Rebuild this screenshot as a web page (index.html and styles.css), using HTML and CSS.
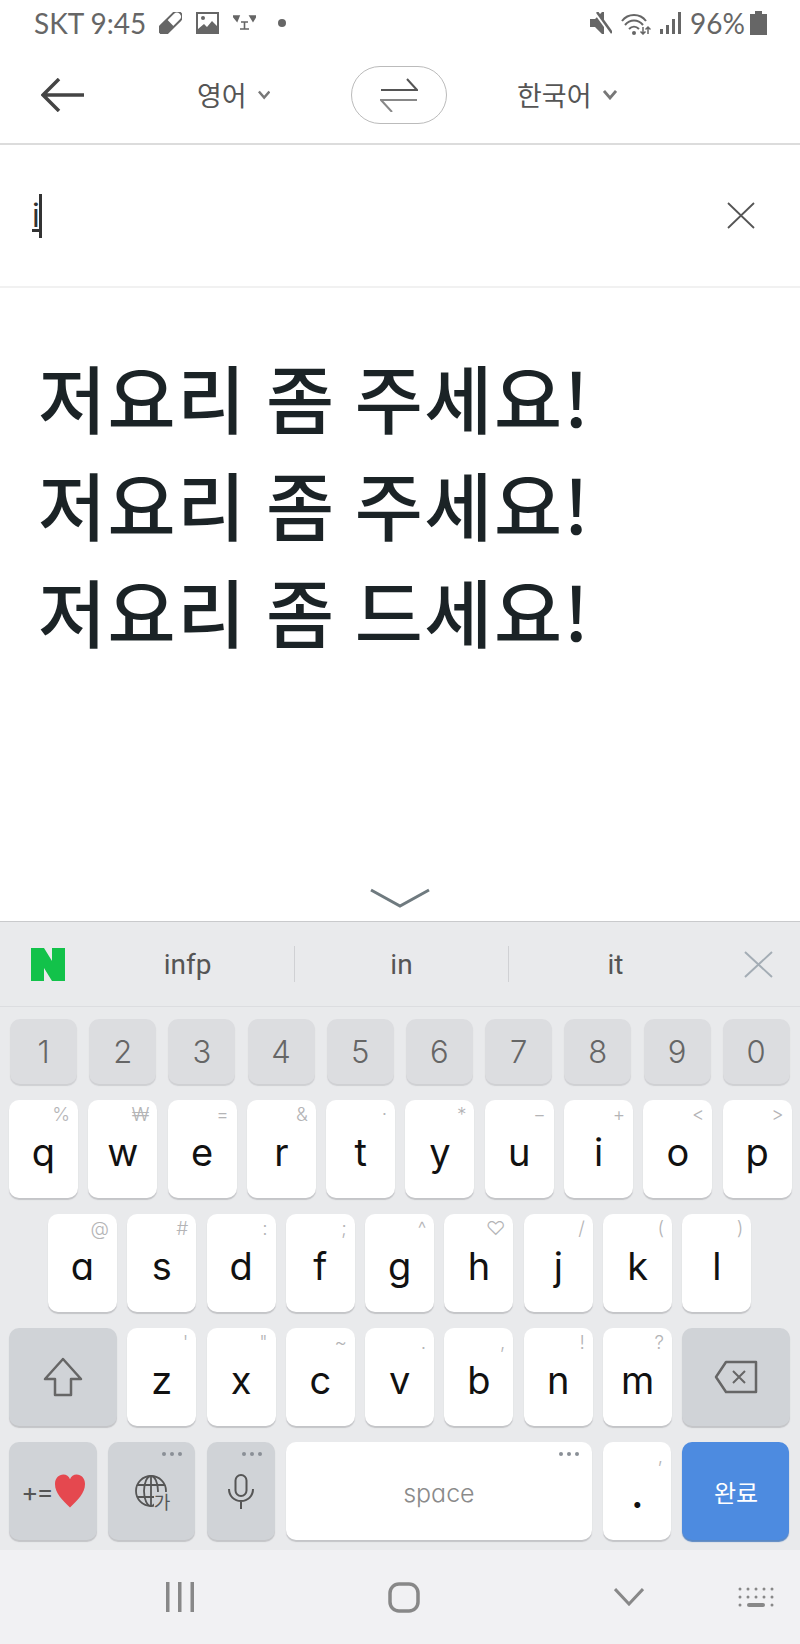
FILE: index.html
```html
<!DOCTYPE html>
<html lang="ko">
<head>
    <meta charset="UTF-8">
    <meta name="viewport" content="width=device-width, initial-scale=1.0">
    <title>번역</title>
    <link rel="stylesheet" href="styles.css">
</head>
<body>
    <div class="status">
        <div class="status-left">
            <span class="status-text">SKT 9:45</span>
            <svg class="ic-pill" width="23" height="22" viewBox="0 0 23 22"><g transform="rotate(45 11.5 11)"><rect x="6.500" y="-3" width="10" height="28" rx="5" fill="#fff" stroke="#666" stroke-width="2"/><path d="M6 11h11v9a5.500 5.500 0 0 1-11 0z" fill="#666"/></g></svg>
            <svg class="ic-image" width="23" height="22" viewBox="0 0 23 22"><path d="M0 0h23v22H0z" fill="#666"/><path d="M2 2h19v12l-5-5-5 6-3-3-6 5z" fill="#fff"/><circle cx="7" cy="6" r="2" fill="#666"/></svg>
            <svg class="ic-face" width="23" height="16" viewBox="0 0 23 16"><path d="M0 1h6l-2 5zM17 1h6l-3 5zM8 7h7M11.500 7v7M7 14h9" fill="#666" stroke="#666" stroke-width="1.600"/></svg>
            <span class="status-dot"></span>
        </div>
        <div class="status-right">
            <svg width="22" height="23" viewBox="0 0 22 23"><path d="M0 7h5l7-7h2v22h-2l-7-7H0z" fill="#666"/><path d="M5 0l16 22" stroke="#fff" stroke-width="3"/><path d="M7 0l15 21" stroke="#666" stroke-width="2.500"/></svg>
            <svg width="30" height="23" viewBox="0 0 30 23" fill="none" stroke="#666" stroke-width="2"><path d="M1 9C7 1 19 1 25 9M4 13c5-6 13-6 18 0M8 17c3-3 7-3 10 0"/><circle cx="13" cy="21" r="2" fill="#666" stroke="none"/><path d="M22 15v7M19.500 19.500L22 22l2.500-2.500M27 22v-7M24.500 17.500L27 15l2.500 2.500" stroke-width="1.500"/></svg>
            <svg width="21" height="22" viewBox="0 0 21 22" fill="#666"><path d="M0 17h3v5H0zM6 13h3v9H6zM12 7h3v15h-3zM18 0h3v22h-3z"/></svg>
            <span class="status-text status-batt">96%</span>
            <svg width="17" height="24" viewBox="0 0 17 24" fill="#666"><path d="M5 0h7v3h5v21H0V3h5z"/></svg>
        </div>
    </div>

    <div class="topbar">
        <svg class="back" width="43" height="34" viewBox="0 0 43 34" fill="none" stroke="#444" stroke-width="3.500"><path d="M18 1L2 17l16 16M2 17h41"/></svg>
        <div class="lang lang-src">영어 <svg width="14" height="10" viewBox="0 0 14 10" fill="none" stroke="#777" stroke-width="2.800"><path d="M1 1l6 7 6-7"/></svg></div>
        <div class="swap">
            <svg width="38" height="34" viewBox="0 0 38 34" fill="none" stroke-width="2"><path d="M1 12h36L27 1" stroke="#555"/><path d="M37 22H1l11 12" stroke="#888"/></svg>
        </div>
        <div class="lang lang-dst">한국어 <svg width="14" height="10" viewBox="0 0 14 10" fill="none" stroke="#777" stroke-width="2.800"><path d="M1 1l6 7 6-7"/></svg></div>
    </div>

    <div class="input-row">
        <span class="typed">i</span><span class="caret"></span>
        <svg class="clear" width="28" height="27" viewBox="0 0 28 27" fill="none" stroke="#555" stroke-width="1.800"><path d="M1 1l26 25M27 1L1 26"/></svg>
    </div>

    <div class="result">
        <p>저요리 좀 주세요!</p>
        <p>저요리 좀 주세요!</p>
        <p>저요리 좀 드세요!</p>
    </div>

    <div class="collapse">
        <svg width="60" height="20" viewBox="0 0 60 20" fill="none" stroke="#6f7a7f" stroke-width="3"><path d="M1 2l29 16L59 2"/></svg>
    </div>

    <div class="keyboard">
        <div class="suggest">
            <svg class="naver" width="34" height="33" viewBox="0 0 34 33"><path d="M0 0h13l8 13V0h13v33H21l-8-13v13H0z" fill="#12c24a"/></svg>
            <span class="word word-1">infp</span>
            <span class="sep"></span>
            <span class="word">in</span>
            <span class="sep"></span>
            <span class="word">it</span>
            <svg class="sug-close" width="29" height="27" viewBox="0 0 29 27" fill="none" stroke="#a4adb5" stroke-width="2"><path d="M1 1l27 25M28 1L1 26"/></svg>
        </div>
        <div class="keys">
            <div class="row row-num">
                <span class="key num">1</span><span class="key num">2</span><span class="key num">3</span><span class="key num">4</span><span class="key num">5</span>
                <span class="key num">6</span><span class="key num">7</span><span class="key num">8</span><span class="key num">9</span><span class="key num">0</span>
            </div>
            <div class="row">
                <span class="key">q<i class="hint">%</i></span><span class="key">w<i class="hint">₩</i></span><span class="key">e<i class="hint">=</i></span><span class="key">r<i class="hint">&amp;</i></span><span class="key">t<i class="hint">·</i></span>
                <span class="key">y<i class="hint">*</i></span><span class="key">u<i class="hint">−</i></span><span class="key">i<i class="hint">+</i></span><span class="key">o<i class="hint">&lt;</i></span><span class="key">p<i class="hint">&gt;</i></span>
            </div>
            <div class="row row-a">
                <span class="key">a<i class="hint">@</i></span><span class="key">s<i class="hint">#</i></span><span class="key">d<i class="hint">:</i></span><span class="key">f<i class="hint">;</i></span><span class="key">g<i class="hint">^</i></span>
                <span class="key">h<i class="hint">♡</i></span><span class="key">j<i class="hint">/</i></span><span class="key">k<i class="hint">(</i></span><span class="key">l<i class="hint">)</i></span>
            </div>
            <div class="row">
                <span class="key fn wide">
                    <svg width="40" height="40" viewBox="0 0 40 40" fill="none" stroke="#666" stroke-width="2.500"><path d="M20 2L2 22h10v16h16V22h10z" stroke-linejoin="round"/></svg>
                </span>
                <span class="key">z<i class="hint">'</i></span><span class="key">x<i class="hint">"</i></span><span class="key">c<i class="hint">~</i></span><span class="key">v<i class="hint">.</i></span><span class="key">b<i class="hint">,</i></span>
                <span class="key">n<i class="hint">!</i></span><span class="key">m<i class="hint">?</i></span>
                <span class="key fn wide">
                    <svg width="44" height="34" viewBox="0 0 44 34" fill="none" stroke="#666" stroke-width="2.500"><path d="M12 2h30v30H12L2 17z" stroke-linejoin="round"/><path d="M19 11l12 12M31 11L19 23" stroke-width="2"/></svg>
                </span>
            </div>
            <div class="row row-bottom">
                <span class="key fn k-sym"><span class="sym-text">+=</span>
                    <svg width="30" height="34" viewBox="0 0 32 35"><path d="M16 35C8 27 0 20 0 10 0 4 4 0 9 0c3 0 6 2 7 5 1-3 4-5 7-5 5 0 9 4 9 10 0 10-8 17-16 25z" fill="#e5484f"/></svg>
                </span>
                <span class="key fn k-globe">
                    <svg class="dots" width="20" height="4" viewBox="0 0 20 4" fill="#8a8f96"><circle cx="2" cy="2" r="2"/><circle cx="10" cy="2" r="2"/><circle cx="18" cy="2" r="2"/></svg>
                    <svg width="33" height="35" viewBox="0 0 33 35" fill="none" stroke="#555" stroke-width="1.800"><circle cx="16" cy="17" r="15"/><ellipse cx="16" cy="17" rx="7" ry="15"/><path d="M16 2v30M2 11h28M2 23h17"/></svg>
                    <span class="ga">가</span>
                </span>
                <span class="key fn k-mic">
                    <svg class="dots" width="20" height="4" viewBox="0 0 20 4" fill="#8a8f96"><circle cx="2" cy="2" r="2"/><circle cx="10" cy="2" r="2"/><circle cx="18" cy="2" r="2"/></svg>
                    <svg width="26" height="35" viewBox="0 0 26 35" fill="none" stroke="#555" stroke-width="2"><rect x="7.500" y="1" width="11" height="21" rx="5.500"/><path d="M1 15c0 7 5 12 12 12s12-5 12-12M13 27v8"/></svg>
                </span>
                <span class="key k-space">space
                    <svg class="dots" width="20" height="4" viewBox="0 0 20 4" fill="#8a8f96"><circle cx="2" cy="2" r="2"/><circle cx="10" cy="2" r="2"/><circle cx="18" cy="2" r="2"/></svg>
                </span>
                <span class="key k-dot">.<i class="hint">,</i></span>
                <span class="key k-done">완료</span>
            </div>
        </div>
    </div>

    <div class="navbar">
        <svg class="nav-recent" width="28" height="30" viewBox="0 0 28 30" fill="#888"><path d="M0 0h3.500v30H0zM12 0h3.500v30H12zM24.500 0H28v30h-3.500z"/></svg>
        <svg class="nav-home" width="32" height="31" viewBox="0 0 32 31" fill="none" stroke="#888" stroke-width="3.500"><rect x="2" y="2" width="28" height="27" rx="9"/></svg>
        <svg class="nav-back" width="30" height="18" viewBox="0 0 30 18" fill="none" stroke="#888" stroke-width="3"><path d="M1 1l14 15L29 1"/></svg>
        <svg class="nav-kbd" width="36" height="21" viewBox="0 0 36 21" fill="#888"><circle cx="2" cy="2" r="1.500"/><circle cx="10" cy="2" r="1.500"/><circle cx="18" cy="2" r="1.500"/><circle cx="26" cy="2" r="1.500"/><circle cx="34" cy="2" r="1.500"/><circle cx="2" cy="10" r="1.500"/><circle cx="10" cy="10" r="1.500"/><circle cx="18" cy="10" r="1.500"/><circle cx="26" cy="10" r="1.500"/><circle cx="34" cy="10" r="1.500"/><circle cx="2" cy="18" r="1.500"/><rect x="9" y="16" width="18" height="4" rx="2"/><circle cx="34" cy="18" r="1.500"/></svg>
    </div>
</body>
</html>
```
FILE: styles.css
```css
* {
    box-sizing: border-box;
}
body {
    margin: 0;
    width: 800px;
    height: 1644px;
    display: flex;
    flex-direction: column;
    background-color: #fff;
    font-family: "Noto Sans CJK KR", "Noto Sans", sans-serif;
    overflow: hidden;
}

/* status bar */
.status {
    height: 46px;
    padding: 0 33px 0 34px;
    display: flex;
    justify-content: space-between;
    align-items: center;
}
.status-left, .status-right {
    display: flex;
    align-items: center;
}
.status-text {
    font-family: Lato, sans-serif;
    font-size: 28px;
    color: #666;
}
.ic-pill {
    margin-left: 13px;
}
.ic-image {
    margin-left: 14px;
}
.ic-face {
    margin-left: 14px;
}
.status-dot {
    width: 8px;
    height: 8px;
    margin-left: 22px;
    border-radius: 50%;
    background-color: #666;
}
.status-right {
    gap: 9px;
}
.status-batt {
    margin-right: -4px;
}

/* top bar */
.topbar {
    height: 99px;
    padding-left: 41px;
    display: flex;
    align-items: center;
    border-bottom: 2px solid #dcdcdc;
}
.lang {
    display: flex;
    align-items: center;
    gap: 11px;
    font-size: 27px;
    color: #555;
    white-space: nowrap;
}
.lang-src {
    width: 73px;
    margin-left: 113px;
}
.lang-dst {
    width: 100px;
    margin-left: 70px;
}
.swap {
    width: 96px;
    height: 58px;
    margin-left: 81px;
    display: flex;
    align-items: center;
    justify-content: center;
    border: 1px solid #bbb;
    border-radius: 29px;
}

/* input */
.input-row {
    height: 143px;
    padding: 0 45px 0 32px;
    display: flex;
    align-items: center;
    border-bottom: 2px solid #f1f1f1;
}
.typed {
    font-family: Inter, sans-serif;
    font-size: 32px;
    line-height: 44px;
    color: #333;
    text-decoration: underline;
}
.caret {
    width: 3px;
    height: 44px;
    margin-left: -1px;
    background-color: #333;
}
.clear {
    margin-left: auto;
}

/* result */
.result {
    flex: 1;
    padding: 54px 0 0 38px;
}
.result p {
    margin: 0;
    height: 107px;
    font-size: 74px;
    font-weight: 500;
    line-height: 107px;
    letter-spacing: 1.5px;
    word-spacing: -3px;
    color: #1b2326;
    white-space: nowrap;
}
.collapse {
    height: 46px;
    display: flex;
    justify-content: center;
    padding-bottom: 13px;
    align-items: flex-end;
}

/* keyboard */
.keyboard {
    background-color: #e9eaec;
    border-top: 1px solid #c9cacc;
}
.suggest {
    height: 85px;
    display: flex;
    align-items: center;
    border-bottom: 1px solid #dcdde0;
    padding-left: 31px;
}
.word {
    width: 213px;
    text-align: center;
    font-family: Roboto, sans-serif;
    font-size: 28px;
    color: #555;
}
.word-1 {
    width: 229px;
    padding-left: 16px;
}
.suggest .naver {
    flex: none;
}
.sep {
    width: 1px;
    height: 36px;
    background-color: #d0d1d4;
}
.sug-close {
    margin-left: 22px;
}
.keys {
    padding: 12px 0 10px 9px;
    display: flex;
    flex-direction: column;
    gap: 16px;
}
.row {
    display: flex;
    gap: 10.3px;
}
.row-num {
    padding-left: 1px;
    gap: 12.2px;
}
.row-a {
    padding-left: 39px;
}
.row-bottom {
    gap: 11.3px;
}
.key {
    position: relative;
    width: 69px;
    height: 98px;
    display: flex;
    align-items: center;
    justify-content: center;
    background-color: #fff;
    border-radius: 10px;
    box-shadow: 0 2px 1px #c4c5c8;
    font-family: Inter, sans-serif;
    font-feature-settings: "cv11";
    font-size: 38px;
    color: #111;
    padding-top: 6px;
}
.num {
    width: 67px;
    height: 65px;
    padding-top: 0;
    background-color: #dcdde0;
    box-shadow: 0 2px 1px #cfd0d3;
    font-size: 31px;
    font-weight: 300;
    color: #666;
}
.hint {
    position: absolute;
    top: 3px;
    right: 8px;
    font-family: Inter, sans-serif;
    font-style: normal;
    font-size: 19px;
    font-weight: 300;
    color: #b4b4b6;
}
.fn {
    background-color: #d0d3d7;
    padding-top: 0;
}
.wide {
    width: 108px;
}
.k-sym {
    width: 88px;
    gap: 3px;
}
.sym-text {
    font-size: 26px;
    letter-spacing: -2px;
    color: #555;
}
.k-globe {
    width: 87px;
}
.k-mic {
    width: 68px;
}
.k-space {
    width: 306px;
    padding-top: 3px;
    font-size: 25px;
    font-weight: 300;
    color: #8a8a8a;
}
.k-dot {
    width: 68px;
    font-weight: 600;
}
.k-done {
    width: 107px;
    padding-top: 0;
    background-color: #4d8be0;
    box-shadow: 0 2px 1px #5a88c4;
    font-family: "Noto Sans CJK KR", sans-serif;
    font-size: 24px;
    color: #fff;
}
.dots {
    position: absolute;
    top: 10px;
    right: 13px;
}
.ga {
    position: absolute;
    right: 25px;
    bottom: 30px;
    font-family: "Noto Sans CJK KR", sans-serif;
    font-size: 18px;
    color: #555;
    background-color: #d0d3d7;
    line-height: 18px;
}

/* nav bar */
.navbar {
    height: 94px;
    padding-left: 166px;
    display: flex;
    align-items: center;
    background-color: #f1f1f3;
}
.nav-home {
    margin-left: 194px;
}
.nav-back {
    margin-left: 194px;
}
.nav-kbd {
    margin-left: 94px;
}
```
